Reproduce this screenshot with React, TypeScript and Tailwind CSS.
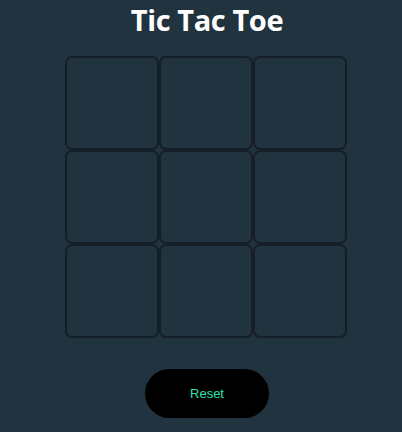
import React, { useState } from 'react';

const App = () => {
  const [board, setBoard] = useState<string[]>(Array(9).fill(''));

  return (
    <div className="w-full min-h-[432px] bg-[#21333e] flex flex-col items-center">
      <h1 className="h-[38px] pt-[2px] ml-[12px] text-[29px] leading-[36px] font-bold text-white font-['Open_Sans',sans-serif] tracking-[-0.4px]">
        Tic Tac Toe
      </h1>

      <div className="mt-[18px] grid grid-cols-[repeat(3,94px)] grid-rows-[repeat(3,94px)] ml-[10px]">
        {board.map((cell, i) => (
          <div
            key={i}
            className="border-2 border-[#141f27] rounded-[7px] flex items-center justify-center text-4xl text-white"
          >
            {cell}
          </div>
        ))}
      </div>

      <button
        onClick={() => setBoard(Array(9).fill(''))}
        className="mt-[31px] ml-[12px] w-[124px] h-[49px] rounded-full bg-black text-[#2de3b0] text-[13px] font-['Liberation_Sans',sans-serif]"
      >
        Reset
      </button>
    </div>
  );
};

export default App;
